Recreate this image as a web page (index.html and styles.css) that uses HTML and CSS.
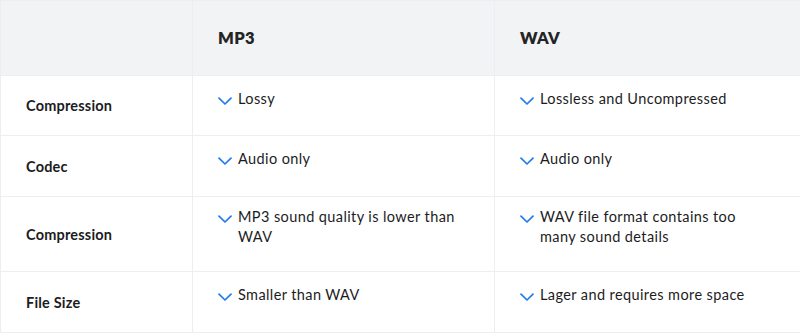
FILE: index.html
```html
<!DOCTYPE html>
<html lang="en">
<head>
<meta charset="utf-8">
<title>MP3 vs WAV</title>
<link rel="stylesheet" href="styles.css">
</head>
<body>
<table class="cmp">
  <colgroup>
    <col class="c-label">
    <col class="c-mp3">
    <col class="c-wav">
  </colgroup>
  <thead>
    <tr class="head-row">
      <th></th>
      <th>MP3</th>
      <th>WAV</th>
    </tr>
  </thead>
  <tbody>
    <tr class="r1">
      <th>Compression</th>
      <td><ul class="items"><li><svg class="chk" viewBox="0 0 14 8"><path d="M1 1.2 L7 7 L13 1.2"/></svg><span>Lossy</span></li></ul></td>
      <td><ul class="items"><li><svg class="chk" viewBox="0 0 14 8"><path d="M1 1.2 L7 7 L13 1.2"/></svg><span>Lossless and Uncompressed</span></li></ul></td>
    </tr>
    <tr class="r2">
      <th>Codec</th>
      <td><ul class="items"><li><svg class="chk" viewBox="0 0 14 8"><path d="M1 1.2 L7 7 L13 1.2"/></svg><span>Audio only</span></li></ul></td>
      <td><ul class="items"><li><svg class="chk" viewBox="0 0 14 8"><path d="M1 1.2 L7 7 L13 1.2"/></svg><span>Audio only</span></li></ul></td>
    </tr>
    <tr class="r3">
      <th>Compression</th>
      <td><ul class="items"><li><svg class="chk" viewBox="0 0 14 8"><path d="M1 1.2 L7 7 L13 1.2"/></svg><span>MP3 sound quality is lower than WAV</span></li></ul></td>
      <td><ul class="items"><li><svg class="chk" viewBox="0 0 14 8"><path d="M1 1.2 L7 7 L13 1.2"/></svg><span>WAV file format contains too many sound details</span></li></ul></td>
    </tr>
    <tr class="r4">
      <th>File Size</th>
      <td><ul class="items"><li><svg class="chk" viewBox="0 0 14 8"><path d="M1 1.2 L7 7 L13 1.2"/></svg><span>Smaller than WAV</span></li></ul></td>
      <td><ul class="items"><li><svg class="chk" viewBox="0 0 14 8"><path d="M1 1.2 L7 7 L13 1.2"/></svg><span>Lager and requires more space</span></li></ul></td>
    </tr>
  </tbody>
</table>
</body>
</html>
```

FILE: styles.css
```css
html, body {
  margin: 0;
  padding: 0;
  background: #ffffff;
}

body {
  font-family: "Lato", "Open Sans", sans-serif;
  color: #1c1c1e;
}

.cmp {
  width: 800px;
  border-collapse: collapse;
  table-layout: fixed;
}

.c-label { width: 192px; }
.c-mp3 { width: 302px; }
.c-wav { width: 306px; }

.cmp th,
.cmp td {
  border: 1px solid #eceef1;
  padding: 0 25px;
  text-align: left;
  vertical-align: middle;
}

.head-row th {
  background: #f2f3f5;
  height: 74px;
  font-size: 16.5px;
  font-weight: 800;
  letter-spacing: 0.3px;
  color: #242424;
}

tbody th {
  font-size: 14.5px;
  font-weight: 700;
  color: #1c1c1e;
  letter-spacing: 0.2px;
}

.r1 th, .r1 td { height: 59px; }
.r2 th, .r2 td { height: 60px; }
.r3 th, .r3 td { height: 74px; }
.r4 th, .r4 td { height: 60px; }

.cmp td { padding-right: 30px; }

.items {
  list-style: none;
  margin: 0 0 14px 0;
  padding: 0;
}

.items li {
  display: flex;
  align-items: flex-start;
  font-size: 14.5px;
  line-height: 20px;
  letter-spacing: 0.4px;
  color: #1c1c1e;
}

.chk {
  flex: none;
  width: 14px;
  height: 8px;
  margin: 8px 6px 0 0;
  fill: none;
  stroke: #1f7cf0;
  stroke-width: 1.7;
  stroke-linecap: round;
  stroke-linejoin: round;
}
```
